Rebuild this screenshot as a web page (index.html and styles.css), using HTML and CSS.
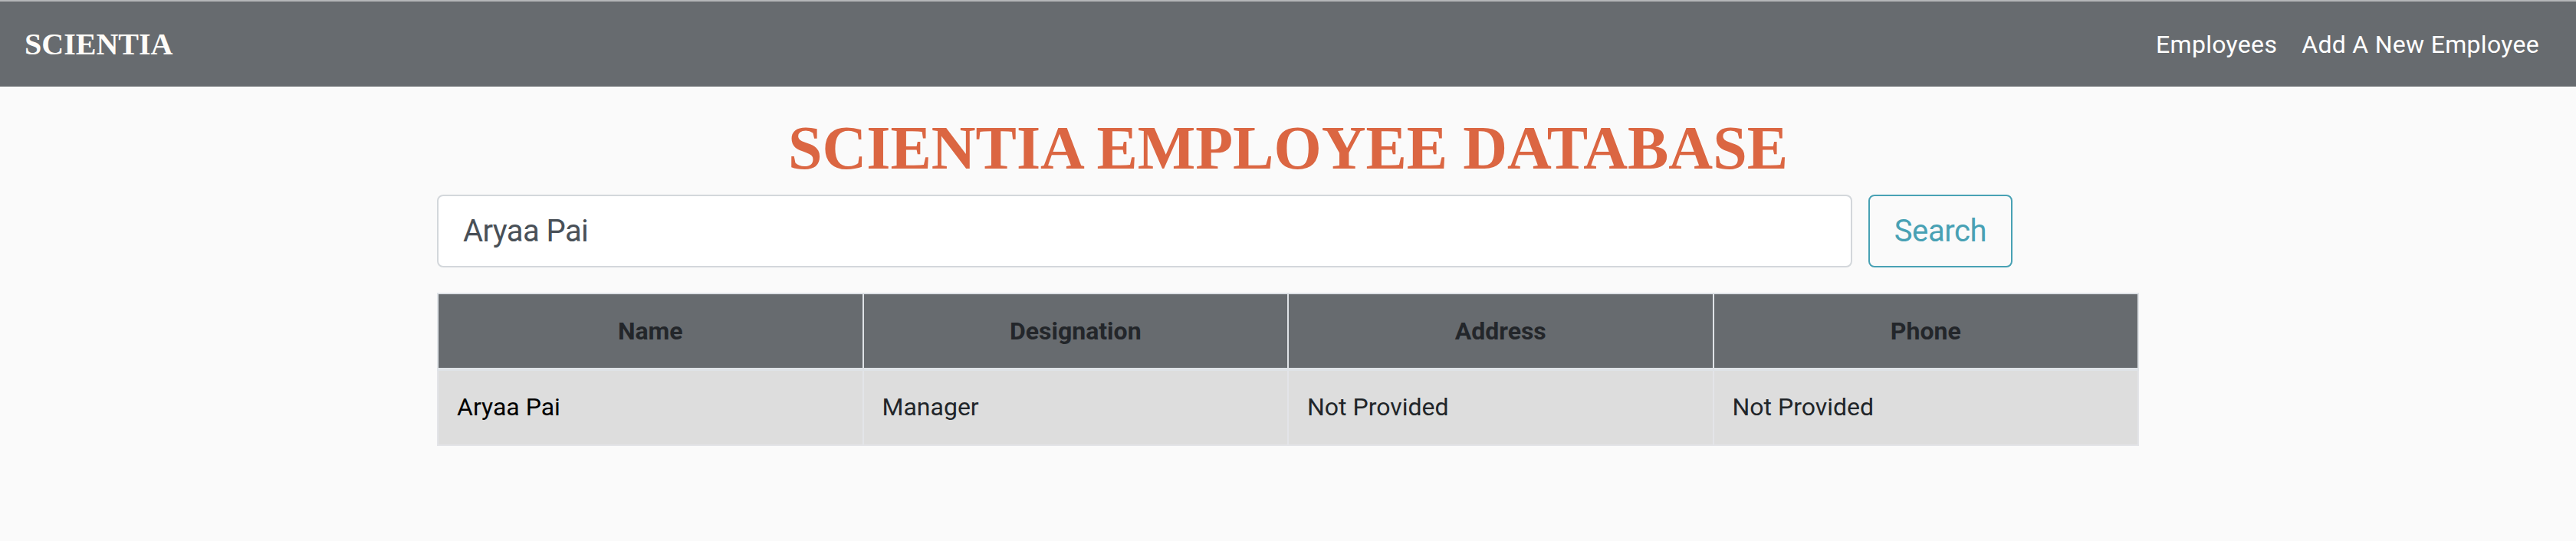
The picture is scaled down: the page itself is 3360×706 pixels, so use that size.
FILE: index.html
```html
<!DOCTYPE html>
<html lang="en">
<head>
<meta charset="utf-8">
<title>Scientia</title>
<link rel="stylesheet" href="styles.css">
</head>
<body>
<nav class="navbar">
  <a class="brand" href="#">SCIENTIA</a>
  <ul class="nav">
    <li><a class="nav-link" href="#">Employees</a></li>
    <li><a class="nav-link" href="#">Add A New Employee</a></li>
  </ul>
</nav>
<main class="container">
  <h1 class="title">SCIENTIA EMPLOYEE DATABASE</h1>
  <form class="search">
    <input class="search-input" type="text" value="Aryaa Pai">
    <button class="search-btn" type="button">Search</button>
  </form>
  <table class="table">
    <thead>
      <tr><th>Name</th><th>Designation</th><th>Address</th><th>Phone</th></tr>
    </thead>
    <tbody>
      <tr><td class="name">Aryaa Pai</td><td>Manager</td><td>Not Provided</td><td>Not Provided</td></tr>
    </tbody>
  </table>
</main>
</body>
</html>
```

FILE: styles.css
```css
* { box-sizing: border-box; }
html, body { margin: 0; padding: 0; }
body {
  background: #fafafa;
  font-family: Roboto, "Liberation Sans", Arial, sans-serif;
  color: #212529;
}
.navbar {
  height: 113px;
  border-top: 2px solid #b4b6b8;
  background: #676b6f;
  display: flex;
  align-items: center;
  justify-content: space-between;
  padding: 0 32px;
}
.brand {
  font-family: "Liberation Serif", "Times New Roman", serif;
  font-weight: bold;
  font-size: 40px;
  color: #fffcf8;
  text-decoration: none;
  line-height: 60px;
}
.nav {
  list-style: none;
  margin: 0;
  padding: 0;
  display: flex;
}
.nav-link {
  display: block;
  padding: 0 16px;
  font-size: 32px;
  line-height: 48px;
  color: #ffffff;
  text-decoration: none;
  letter-spacing: 0.3px;
}
.container {
  width: 2220px;
  margin: 0 auto;
}
.title {
  margin: 32px 0 13px;
  font-family: "Liberation Serif", "Times New Roman", serif;
  font-weight: bold;
  font-size: 80px;
  line-height: 96px;
  text-align: center;
  color: #db6642;
}
.search {
  display: flex;
  gap: 21px;
  margin: 0 0 33px;
}
.search-input {
  width: 1846px;
  height: 95px;
  border: 2px solid #d3d7db;
  border-radius: 8px;
  background: #ffffff;
  padding: 0 32px;
  font-family: Roboto, "Liberation Sans", Arial, sans-serif;
  font-size: 40px;
  letter-spacing: -0.6px;
  color: #495057;
  outline: none;
}
.search-btn {
  width: 188px;
  height: 95px;
  border: 2px solid #48a1b4;
  border-radius: 8px;
  background: transparent;
  font-family: Roboto, "Liberation Sans", Arial, sans-serif;
  font-size: 40px;
  letter-spacing: -0.4px;
  color: #48a1b4;
  padding: 0;
}
.table {
  width: 2220px;
  table-layout: fixed;
  border-collapse: collapse;
  border: 2px solid #dfe3e7;
}
.table th {
  background: #676b6f;
  color: #23262a;
  font-size: 32px;
  font-weight: bold;
  line-height: 48px;
  padding: 24px;
  text-align: center;
  border: 2px solid #dfe3e7;
  border-bottom-width: 4px;
}
.table td {
  background: #dddddd;
  color: #212529;
  font-size: 32px;
  line-height: 48px;
  padding: 23px 24px 25px;
  border: 2px solid #e3e4e8;
  text-align: left;
}
.table td.name { color: #000000; }
```
